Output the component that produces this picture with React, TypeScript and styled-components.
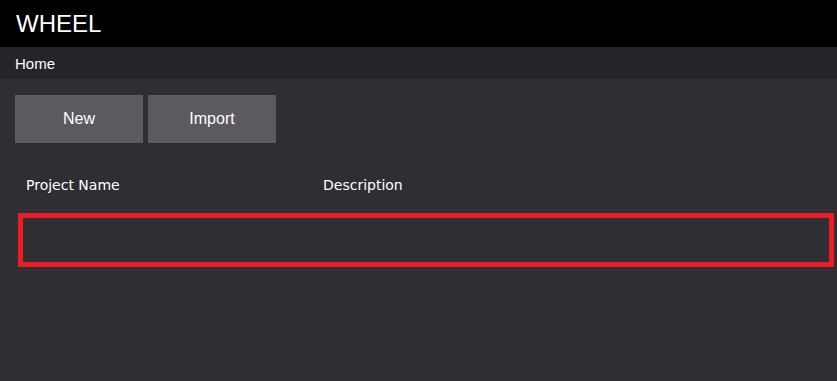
import styled, { createGlobalStyle } from "styled-components"

const GlobalStyle = createGlobalStyle`
    html, body {
        margin: 0;
        padding: 0;
        background: #2f2e33;
    }
`

const Page = styled.div`
    min-height: 100vh;
    display: flex;
    flex-direction: column;
    background: #2f2e33;
    color: white;
    font-family: "Liberation Sans", Arial, sans-serif;
`

const TitleBar = styled.header`
    height: 47px;
    background: #000;
    display: flex;
    align-items: center;
    padding-left: 16px;
    font-size: 24px;
`

const Breadcrumb = styled.nav`
    height: 32px;
    background: #252429;
    display: flex;
    align-items: center;
    padding-left: 15px;
    font-size: 15px;
`

const Content = styled.main`
    padding: 16px 3px 0 15px;
`

const Toolbar = styled.div`
    display: flex;
    gap: 5px;
`

const ActionButton = styled.button`
    width: 128px;
    height: 48px;
    border: none;
    background: #5b5a5f;
    color: white;
    font-family: "Liberation Sans", Arial, sans-serif;
    font-size: 16px;
    cursor: pointer;
`

const Table = styled.div`
    margin: 23px 0 0 3px;
    font-family: "DejaVu Sans", Verdana, sans-serif;
    font-size: 14px;
`

const HeaderRow = styled.div`
    display: grid;
    grid-template-columns: 297px 1fr;
    height: 38px;
    align-items: center;
`

const Cell = styled.div`
    padding-left: 8px;
`

const EmptyRow = styled.div`
    height: 54px;
    box-sizing: border-box;
    border: 5px solid #ed1c24;
    margin-top: 9px;
`

const App = () => {
    return (
        <Page>
            <GlobalStyle />
            <TitleBar>WHEEL</TitleBar>
            <Breadcrumb>Home</Breadcrumb>
            <Content>
                <Toolbar>
                    <ActionButton>New</ActionButton>
                    <ActionButton>Import</ActionButton>
                </Toolbar>
                <Table>
                    <HeaderRow>
                        <Cell>Project Name</Cell>
                        <Cell>Description</Cell>
                    </HeaderRow>
                    <EmptyRow />
                </Table>
            </Content>
        </Page>
    )
}

export default App
